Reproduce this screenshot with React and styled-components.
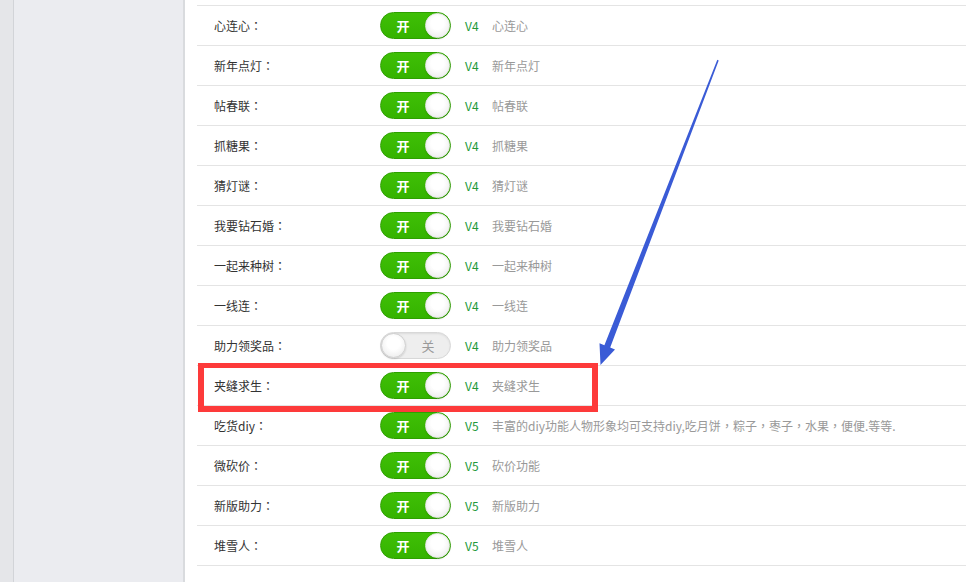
import React from "react";
import styled, { createGlobalStyle } from "styled-components";

const Global = createGlobalStyle`
  html, body { margin: 0; padding: 0; background: #fff; }
  body { font-family: "Microsoft YaHei", "Noto Sans CJK SC", "Noto Sans", sans-serif; overflow: hidden; }
  #root { height: 582px; }
`;

const Page = styled.div`
  position: relative;
  display: flex;
  width: 966px;
  height: 582px;
  overflow: hidden;
`;

const Strip = styled.div`
  width: 13px;
  flex: none;
  background: #e5e6e9;
  border-right: 1px solid #d2d4d8;
`;

const Sidebar = styled.div`
  width: 169px;
  flex: none;
  background: #ebecf0;
  border-right: 2px solid #d9dbde;
`;

const Main = styled.div`
  flex: 1;
  padding: 5px 0 0 12px;
  background: #fff;
`;

const List = styled.ul`
  list-style: none;
  margin: 0;
  padding: 0;
  border-top: 1px solid #e4e4e4;
`;

const Row = styled.li`
  display: flex;
  align-items: center;
  height: 39px;
  border-bottom: 1px solid #e4e4e4;
  padding-left: 17px;
  font-size: 12px;
`;

const Label = styled.span`
  width: 166px;
  flex: none;
  color: #333;
`;

const Punct = styled.span`
  font-family: "Noto Sans CJK TC", "Noto Sans CJK SC", sans-serif;
`;

const Toggle = styled.span`
  position: relative;
  box-sizing: border-box;
  width: 71px;
  height: 27px;
  flex: none;
  border-radius: 14px;
  display: flex;
  align-items: center;
  background: ${(p) => (p.$on ? "linear-gradient(#3fbf06, #35b300)" : "#eeeeee")};
  border: 1px solid ${(p) => (p.$on ? "#2ea000" : "#d8d8d8")};
  box-shadow: ${(p) => (p.$on ? "none" : "inset 0 1px 2px rgba(0,0,0,0.08)")};
`;

const ToggleText = styled.span`
  position: absolute;
  top: 0;
  bottom: 0;
  display: flex;
  align-items: center;
  justify-content: center;
  width: 44px;
  left: ${(p) => (p.$on ? "0" : "25px")};
  font-size: 13px;
  font-weight: ${(p) => (p.$on ? 700 : 400)};
  color: ${(p) => (p.$on ? "#fff" : "#999")};
`;

const Knob = styled.span`
  position: absolute;
  top: 0;
  ${(p) => (p.$on ? "right: 0;" : "left: 0;")}
  width: 25px;
  height: 25px;
  box-sizing: border-box;
  border-radius: 50%;
  background: radial-gradient(circle at 50% 40%, #ffffff 35%, #e6e6e6 100%);
  border: 1px solid ${(p) => (p.$on ? "#e8e8e8" : "#d0d0d0")};
  box-shadow: 0 1px 2px rgba(0, 0, 0, 0.15);
`;

const Version = styled.span`
  margin-left: 14px;
  width: 27px;
  flex: none;
  color: #21993a;
  font-size: 12px;
`;

const Desc = styled.span`
  color: #999;
  white-space: nowrap;
`;

const Highlight = styled.div`
  position: absolute;
  left: 198px;
  top: 363px;
  width: 400px;
  height: 49px;
  box-sizing: border-box;
  border: 6px solid #fd3a3a;
  border-top-width: 5px;
  pointer-events: none;
`;

const ArrowSvg = styled.svg`
  position: absolute;
  left: 0;
  top: 0;
  pointer-events: none;
`;

const rows = [
  ["心连心：", true, "V4", "心连心"],
  ["新年点灯：", true, "V4", "新年点灯"],
  ["帖春联：", true, "V4", "帖春联"],
  ["抓糖果：", true, "V4", "抓糖果"],
  ["猜灯谜：", true, "V4", "猜灯谜"],
  ["我要钻石婚：", true, "V4", "我要钻石婚"],
  ["一起来种树：", true, "V4", "一起来种树"],
  ["一线连：", true, "V4", "一线连"],
  ["助力领奖品：", false, "V4", "助力领奖品"],
  ["夹缝求生：", true, "V4", "夹缝求生"],
  ["吃货diy：", true, "V5", "丰富的diy功能人物形象均可支持diy,吃月饼，粽子，枣子，水果，便便.等等."],
  ["微砍价：", true, "V5", "砍价功能"],
  ["新版助力：", true, "V5", "新版助力"],
  ["堆雪人：", true, "V5", "堆雪人"],
];

function withPunct(text) {
  return text.split(/([，：])/).map((part, i) =>
    part === "，" || part === "：" ? <Punct key={i}>{part}</Punct> : part
  );
}

export default function App() {
  return (
    <>
      <Global />
      <Page>
        <Strip />
        <Sidebar />
        <Main>
          <List>
            {rows.map(([label, on, ver, desc]) => (
              <Row key={label}>
                <Label>{withPunct(label)}</Label>
                <Toggle $on={on}>
                  <ToggleText $on={on}>{on ? "开" : "关"}</ToggleText>
                  <Knob $on={on} />
                </Toggle>
                <Version>{ver}</Version>
                <Desc>{withPunct(desc)}</Desc>
              </Row>
            ))}
          </List>
        </Main>
        <Highlight />
        <ArrowSvg width="966" height="582" viewBox="0 0 966 582">
          <polygon
            points="717.3,59.8 718.7,60.4 610.2,347.4 615,349.4 600.5,365 599.5,343.2 604.4,345.2"
            fill="#3a5bd6"
          />
        </ArrowSvg>
      </Page>
    </>
  );
}
